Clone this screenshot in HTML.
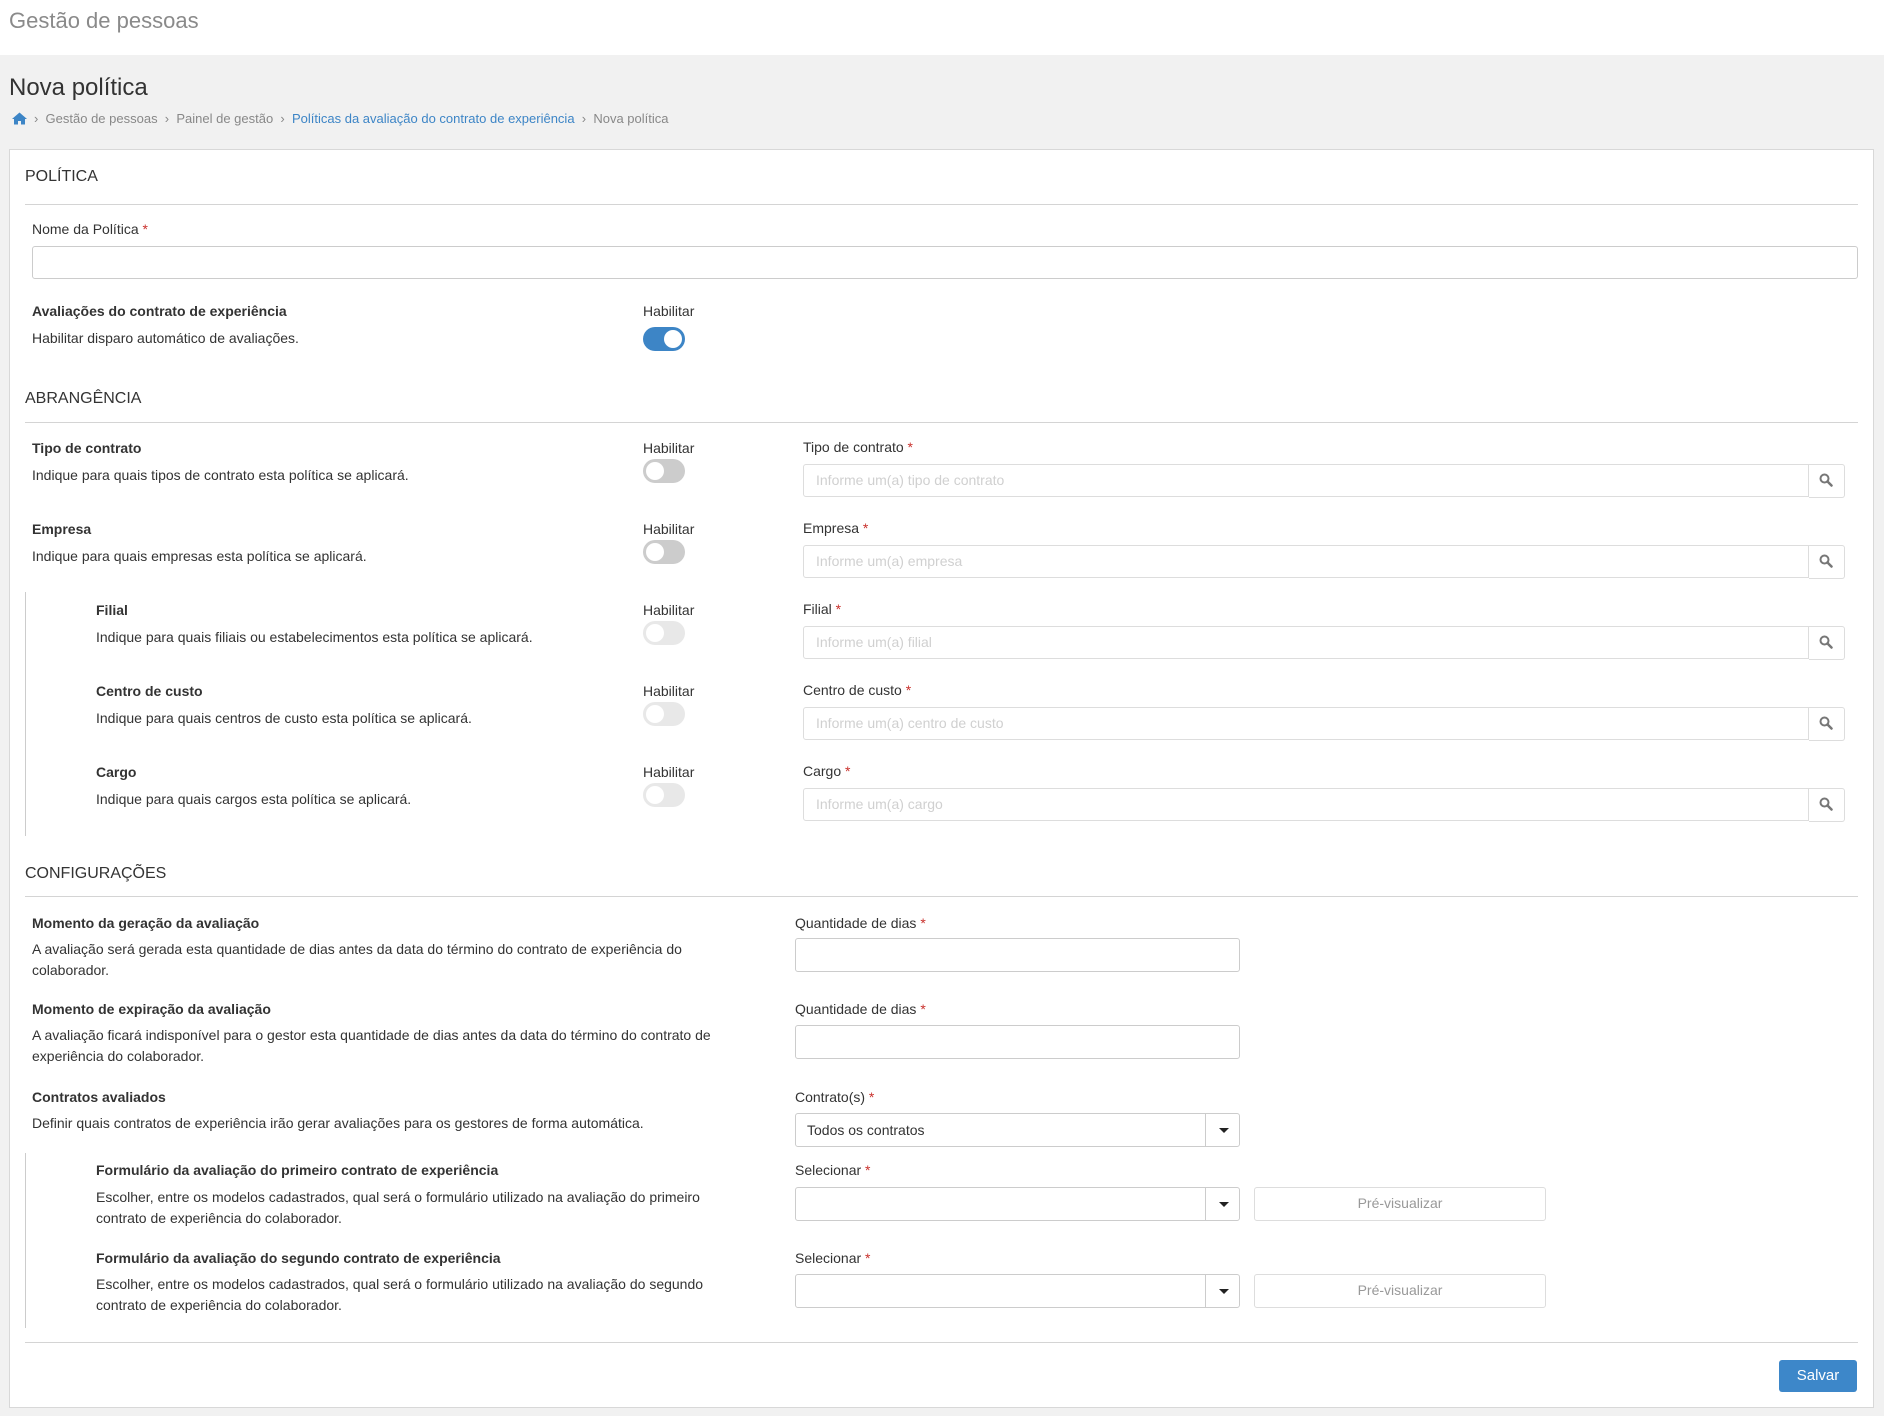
<!DOCTYPE html>
<html><head><meta charset="utf-8"><style>
*{box-sizing:border-box;margin:0;padding:0}
body{width:1884px;height:1416px;background:#f1f1f1;font-family:"Liberation Sans",sans-serif;color:#333;position:relative;overflow:hidden;font-size:14px}
.a{position:absolute;line-height:20px;white-space:nowrap}
.b{font-weight:bold}
.r{color:#c9302c}
.hdr{position:absolute;left:0;top:0;width:1884px;height:55px;background:#fff}
.panel{position:absolute;left:9px;top:149px;width:1865px;height:1259px;background:#fff;border:1px solid #d8d8d8}
.hr{position:absolute;left:25px;width:1833px;height:1px;background:#d4d4d4}
.inp{position:absolute;border:1px solid #ccc;border-radius:3px;background:#fff}
.ph{position:absolute;left:12px;top:5px;color:#d0d0d0;font-size:14px;line-height:20px}
.addon{position:absolute;border:1px solid #ddd;border-left:none;border-radius:0 3px 3px 0;background:#fff;width:36px}
.tg{position:absolute;width:42px;height:24px;border-radius:12px}
.tg i{position:absolute;top:3px;width:18px;height:18px;border-radius:50%;background:#fff}
.vl{position:absolute;left:25px;width:1px;background:#ccc}
.sel .arr{position:absolute;right:0;top:0;bottom:0;width:34px;border-left:1px solid #ccc}
.sel .arr:after{content:"";position:absolute;left:13px;top:14px;border-left:5px solid transparent;border-right:5px solid transparent;border-top:5px solid #222}
.btn{position:absolute;border:1px solid #ddd;border-radius:3px;background:#fff;color:#999;text-align:center;line-height:31px;font-size:14px}
</style></head><body>
<div class="hdr"></div>
<div class="a" style="left:9px;top:7px;font-size:22px;line-height:28px;color:#8a8a8a">Gestão de pessoas</div>
<div class="a" style="left:9px;top:73px;font-size:24px;line-height:30px;color:#333">Nova política</div>
<svg style="position:absolute;left:12px;top:112px" width="15" height="13" viewBox="0 0 15 13"><path d="M7.5 0.5 L0 7 L2 7 L2 12.5 L6 12.5 L6 9 L9 9 L9 12.5 L13 12.5 L13 7 L15 7 Z" fill="#3d85c6"/></svg>
<div class="a" style="left:34px;top:109px;font-size:13px;color:#888">›&nbsp; Gestão de pessoas &nbsp;›&nbsp; Painel de gestão &nbsp;›&nbsp; <span style="color:#3d85c6">Políticas da avaliação do contrato de experiência</span> &nbsp;›&nbsp; Nova política</div>

<div class="panel"></div>
<div class="a" style="left:25px;top:167px;font-size:16px">POLÍTICA</div>
<div class="hr" style="top:204px"></div>
<div class="a" style="left:32px;top:219px">Nome da Política <span class="r">*</span></div>
<div class="inp" style="left:32px;top:246px;width:1826px;height:33px"></div>

<div class="a b" style="left:32px;top:301px">Avaliações do contrato de experiência</div>
<div class="a" style="left:32px;top:328px">Habilitar disparo automático de avaliações.</div>
<div class="a" style="left:643px;top:301px">Habilitar</div>
<div class="tg" style="left:643px;top:327px;background:#3d85c6"><i style="left:21px"></i></div>

<div class="a" style="left:25px;top:389px;font-size:16px">ABRANGÊNCIA</div>
<div class="hr" style="top:422px"></div>

<div class="a b" style="left:32px;top:438px">Tipo de contrato</div>
<div class="a" style="left:32px;top:465px">Indique para quais tipos de contrato esta política se aplicará.</div>
<div class="a b" style="left:32px;top:519px">Empresa</div>
<div class="a" style="left:32px;top:546px">Indique para quais empresas esta política se aplicará.</div>
<div class="vl" style="top:592px;height:244px"></div>
<div class="a b" style="left:96px;top:600px">Filial</div>
<div class="a" style="left:96px;top:627px">Indique para quais filiais ou estabelecimentos esta política se aplicará.</div>
<div class="a b" style="left:96px;top:681px">Centro de custo</div>
<div class="a" style="left:96px;top:708px">Indique para quais centros de custo esta política se aplicará.</div>
<div class="a b" style="left:96px;top:762px">Cargo</div>
<div class="a" style="left:96px;top:789px">Indique para quais cargos esta política se aplicará.</div>

<div class="a" style="left:643px;top:438px">Habilitar</div>
<div class="a" style="left:643px;top:519px">Habilitar</div>
<div class="a" style="left:643px;top:600px">Habilitar</div>
<div class="a" style="left:643px;top:681px">Habilitar</div>
<div class="a" style="left:643px;top:762px">Habilitar</div>
<div class="tg" style="left:643px;top:459px;background:#ccc"><i style="left:3px"></i></div>
<div class="tg" style="left:643px;top:540px;background:#ccc"><i style="left:3px"></i></div>
<div class="tg" style="left:643px;top:621px;background:#e8e8e8"><i style="left:3px"></i></div>
<div class="tg" style="left:643px;top:702px;background:#e8e8e8"><i style="left:3px"></i></div>
<div class="tg" style="left:643px;top:783px;background:#e8e8e8"><i style="left:3px"></i></div>

<div class="a" style="left:803px;top:437px">Tipo de contrato <span class="r">*</span></div>
<div class="a" style="left:803px;top:518px">Empresa <span class="r">*</span></div>
<div class="a" style="left:803px;top:599px">Filial <span class="r">*</span></div>
<div class="a" style="left:803px;top:680px">Centro de custo <span class="r">*</span></div>
<div class="a" style="left:803px;top:761px">Cargo <span class="r">*</span></div>

<div class="inp" style="left:803px;top:464px;width:1006px;height:33px;border-color:#ddd;border-radius:3px 0 0 3px"><span class="ph">Informe um(a) tipo de contrato</span></div>
<div class="inp" style="left:803px;top:545px;width:1006px;height:33px;border-color:#ddd;border-radius:3px 0 0 3px"><span class="ph">Informe um(a) empresa</span></div>
<div class="inp" style="left:803px;top:626px;width:1006px;height:33px;border-color:#ddd;border-radius:3px 0 0 3px"><span class="ph">Informe um(a) filial</span></div>
<div class="inp" style="left:803px;top:707px;width:1006px;height:33px;border-color:#ddd;border-radius:3px 0 0 3px"><span class="ph">Informe um(a) centro de custo</span></div>
<div class="inp" style="left:803px;top:788px;width:1006px;height:33px;border-color:#ddd;border-radius:3px 0 0 3px"><span class="ph">Informe um(a) cargo</span></div>
<div class="addon" style="left:1809px;top:464px;height:34px"></div>
<div class="addon" style="left:1809px;top:545px;height:34px"></div>
<div class="addon" style="left:1809px;top:626px;height:34px"></div>
<div class="addon" style="left:1809px;top:707px;height:34px"></div>
<div class="addon" style="left:1809px;top:788px;height:34px"></div>
<svg style="position:absolute;left:1819px;top:473px" width="14" height="14" viewBox="0 0 14 14"><circle cx="5.5" cy="5.5" r="4" fill="none" stroke="#777" stroke-width="2"/><path d="M8.5 8.5 L12.5 12.5" stroke="#777" stroke-width="2.5" stroke-linecap="round"/></svg>
<svg style="position:absolute;left:1819px;top:554px" width="14" height="14" viewBox="0 0 14 14"><circle cx="5.5" cy="5.5" r="4" fill="none" stroke="#777" stroke-width="2"/><path d="M8.5 8.5 L12.5 12.5" stroke="#777" stroke-width="2.5" stroke-linecap="round"/></svg>
<svg style="position:absolute;left:1819px;top:635px" width="14" height="14" viewBox="0 0 14 14"><circle cx="5.5" cy="5.5" r="4" fill="none" stroke="#777" stroke-width="2"/><path d="M8.5 8.5 L12.5 12.5" stroke="#777" stroke-width="2.5" stroke-linecap="round"/></svg>
<svg style="position:absolute;left:1819px;top:716px" width="14" height="14" viewBox="0 0 14 14"><circle cx="5.5" cy="5.5" r="4" fill="none" stroke="#777" stroke-width="2"/><path d="M8.5 8.5 L12.5 12.5" stroke="#777" stroke-width="2.5" stroke-linecap="round"/></svg>
<svg style="position:absolute;left:1819px;top:797px" width="14" height="14" viewBox="0 0 14 14"><circle cx="5.5" cy="5.5" r="4" fill="none" stroke="#777" stroke-width="2"/><path d="M8.5 8.5 L12.5 12.5" stroke="#777" stroke-width="2.5" stroke-linecap="round"/></svg>

<div class="a" style="left:25px;top:864px;font-size:16px">CONFIGURAÇÕES</div>
<div class="hr" style="top:896px"></div>

<div class="a b" style="left:32px;top:913px">Momento da geração da avaliação</div>
<div class="a" style="left:32px;top:939px;line-height:21px;white-space:normal;width:720px">A avaliação será gerada esta quantidade de dias antes da data do término do contrato de experiência do colaborador.</div>
<div class="a" style="left:795px;top:913px">Quantidade de dias <span class="r">*</span></div>
<div class="inp" style="left:795px;top:938px;width:445px;height:34px"></div>

<div class="a b" style="left:32px;top:999px">Momento de expiração da avaliação</div>
<div class="a" style="left:32px;top:1025px;line-height:21px;white-space:normal;width:730px">A avaliação ficará indisponível para o gestor esta quantidade de dias antes da data do término do contrato de experiência do colaborador.</div>
<div class="a" style="left:795px;top:999px">Quantidade de dias <span class="r">*</span></div>
<div class="inp" style="left:795px;top:1025px;width:445px;height:34px"></div>

<div class="a b" style="left:32px;top:1087px">Contratos avaliados</div>
<div class="a" style="left:32px;top:1113px">Definir quais contratos de experiência irão gerar avaliações para os gestores de forma automática.</div>
<div class="a" style="left:795px;top:1087px">Contrato(s) <span class="r">*</span></div>
<div class="inp sel" style="left:795px;top:1113px;width:445px;height:34px"><span class="a" style="left:11px;top:6px">Todos os contratos</span><div class="arr"></div></div>

<div class="vl" style="top:1153px;height:175px"></div>
<div class="a b" style="left:96px;top:1160px">Formulário da avaliação do primeiro contrato de experiência</div>
<div class="a" style="left:96px;top:1187px;line-height:21px;white-space:normal;width:625px">Escolher, entre os modelos cadastrados, qual será o formulário utilizado na avaliação do primeiro contrato de experiência do colaborador.</div>
<div class="a" style="left:795px;top:1160px">Selecionar <span class="r">*</span></div>
<div class="inp sel" style="left:795px;top:1187px;width:445px;height:34px"><div class="arr"></div></div>
<div class="btn" style="left:1254px;top:1187px;width:292px;height:34px">Pré-visualizar</div>

<div class="a b" style="left:96px;top:1248px">Formulário da avaliação do segundo contrato de experiência</div>
<div class="a" style="left:96px;top:1274px;line-height:21px;white-space:normal;width:625px">Escolher, entre os modelos cadastrados, qual será o formulário utilizado na avaliação do segundo contrato de experiência do colaborador.</div>
<div class="a" style="left:795px;top:1248px">Selecionar <span class="r">*</span></div>
<div class="inp sel" style="left:795px;top:1274px;width:445px;height:34px"><div class="arr"></div></div>
<div class="btn" style="left:1254px;top:1274px;width:292px;height:34px">Pré-visualizar</div>

<div class="hr" style="top:1342px"></div>
<div style="position:absolute;left:1779px;top:1360px;width:78px;height:32px;background:#3d87c9;border-radius:3px;color:#fff;text-align:center;line-height:32px;font-size:15px">Salvar</div>
</body></html>
